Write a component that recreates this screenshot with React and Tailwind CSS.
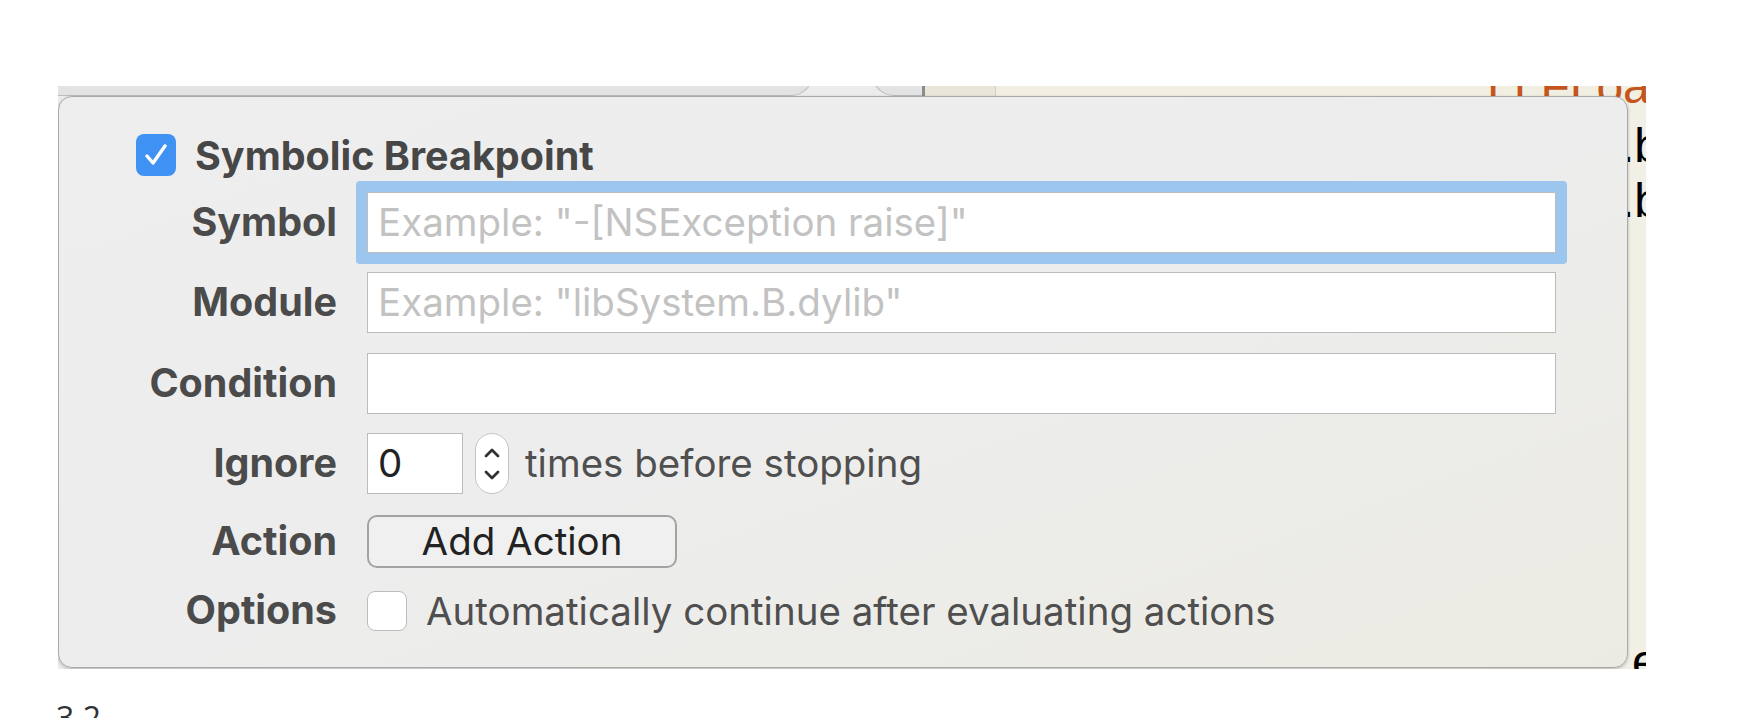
import React from 'react';

// Xcode symbolic breakpoint popover, screenshot embedded in a page

const Label = ({ children }) => (
  <div className="w-[201px] shrink-0 text-right font-bold text-[39.5px] text-[#4b4b4b]">{children}</div>
);

const Field = ({ placeholder, focused }) => (
  <div
    className={`h-[61px] flex-1 flex items-center bg-white border border-[#bcbcbc] pl-[10px] ${
      focused ? 'rounded-[1px] ring-[11px] ring-[#9dc6ef]' : ''
    }`}
  >
    {placeholder && <span className="text-[#c2c2c2]">{placeholder}</span>}
  </div>
);

const Row = ({ label, className = '', children }) => (
  <div className={`flex items-center gap-[30px] ${className}`}>
    <Label>{label}</Label>
    {children}
  </div>
);

const Stepper = () => (
  <div className="w-[34px] h-[61px] rounded-full bg-white border border-[#c4c4c4] flex items-center justify-center">
    <svg width="20" height="44" viewBox="0 0 20 44" fill="none" stroke="#333" strokeWidth="2.8" strokeLinecap="round" strokeLinejoin="round">
      <path d="M4 14 L10 8 L16 14" />
      <path d="M4 30 L10 36 L16 30" />
    </svg>
  </div>
);

export default function App() {
  return (
    <div className="min-h-screen bg-white font-['Inter','Liberation_Sans',sans-serif]">
      <div className="pt-[86px] pl-[58px]">
        <div className="relative w-[1588px] h-[583px] overflow-hidden bg-[#ececec]">
          {/* window behind the popover */}
          <div className="absolute inset-0 flex flex-col">
            <div className="flex h-[10px] overflow-hidden bg-[#ececec]">
              <div className="w-[755px] h-[28px] -mt-[18px] rounded-br-[22px] bg-[#e3e3e3] border-b border-r border-[#bdbdbd]" />
              <div className="w-[59px]" />
              <div className="w-[50px] h-[28px] -mt-[18px] rounded-bl-[22px] bg-[#e3e3e3] border-b border-l border-[#bdbdbd]" />
              <div className="w-[3px] bg-[#8c8c8c]" />
              <div className="w-[71px] bg-[#e9e6d8] border-r border-[#d4d0c0]" />
              <div className="flex-1 bg-[#f1eee2]" />
            </div>
            <div className="flex flex-1">
              <div className="w-[864px] bg-[#ececec]" />
              <div className="flex-1 bg-[#f1efe6]" />
            </div>
          </div>

          {/* editor text peeking out */}
          <div className="absolute left-[1429px] top-[-27px] font-['Liberation_Sans',sans-serif] text-[48px] leading-[55px] whitespace-nowrap">
            <div className="text-[#c4561d]">LLFLoa</div>
            <div className="pl-[134px] mt-[4px] text-black">.b</div>
            <div className="pl-[134px] text-black">.b</div>
          </div>
          <div className="absolute left-[1574px] top-[548px] font-['Liberation_Sans',sans-serif] text-[48px] leading-[55px] text-black">
            e
          </div>

          {/* popover */}
          <div className="absolute left-0 top-[10px] w-[1570px] h-[572px] rounded-[14px] border border-[#a9a9a9] bg-linear-to-br from-[#eeeeee] via-[#ededed] to-[#ecebe3] shadow-[0_1px_3px_rgba(0,0,0,0.25)] pl-[77px] pr-[71px] pt-[37px] text-[38.5px] leading-none">
            <div className="flex items-center gap-[19px] h-[42px]">
              <div className="w-[40px] h-[42px] rounded-[8px] bg-[#3f92f4] flex items-center justify-center">
                <svg width="28" height="26" viewBox="0 0 28 26" fill="none" stroke="white" strokeWidth="3.4" strokeLinecap="round" strokeLinejoin="round">
                  <path d="M5 14 L11 21 L23 4" />
                </svg>
              </div>
              <div className="font-bold text-[39.5px] text-[#474747] pt-[3px]">Symbolic Breakpoint</div>
            </div>

            <Row label="Symbol" className="mt-[16px]">
              <Field focused placeholder={'Example: "-[NSException raise]"'} />
            </Row>
            <Row label="Module" className="mt-[19px]">
              <Field placeholder={'Example: "libSystem.B.dylib"'} />
            </Row>
            <Row label="Condition" className="mt-[20px]">
              <Field />
            </Row>
            <Row label="Ignore" className="mt-[19px]">
              <div className="flex items-center">
                <div className="w-[96px] h-[61px] bg-white border border-[#bcbcbc] pl-[10px] flex items-center text-[#222]">0</div>
                <div className="ml-[12px]">
                  <Stepper />
                </div>
                <span className="ml-[16px] text-[#4f4f4f]">times before stopping</span>
              </div>
            </Row>
            <Row label="Action" className="mt-[21px]">
              <button className="w-[310px] h-[53px] rounded-[10px] border-2 border-[#a3a3a3] bg-[#f0f0f0] text-[#222] flex items-center justify-center">
                Add Action
              </button>
            </Row>
            <Row label="Options" className="mt-[23px]">
              <div className="flex items-center gap-[19px]">
                <div className="w-[40px] h-[40px] rounded-[8px] bg-white border border-[#bdbdbd]" />
                <span className="text-[#4f4f4f]">Automatically continue after evaluating actions</span>
              </div>
            </Row>
          </div>
        </div>
        <div className="mt-[30px] -ml-[2px] text-[32px] leading-[1.2] text-[#333] font-['Open_Sans',sans-serif]">3.2</div>
      </div>
    </div>
  );
}
